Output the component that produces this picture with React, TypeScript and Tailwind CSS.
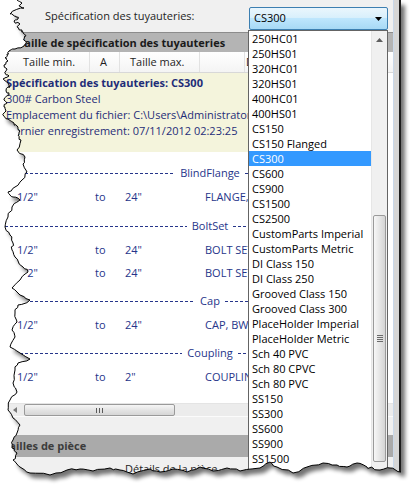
import React from "react";

const items = [
  "250HC01","250HS01","320HC01","320HS01","400HC01","400HS01","CS150","CS150 Flanged","CS300","CS600","CS900","CS1500","CS2500",
  "CustomParts Imperial","CustomParts Metric","DI Class 150","DI Class 250","Grooved Class 150","Grooved Class 300",
  "PlaceHolder Imperial","PlaceHolder Metric","Sch 40 PVC","Sch 80 CPVC","Sch 80 PVC","SS150","SS300","SS600","SS900","SS1500","SS2500",
];

const leftEdge: [number, number][] = [
  [17,0],[22,3],[19,6],[24,8],[13,11],[10,14],[16,16],[18,19],[14,21],[20,24],[17,27],[22,30],[23,33],[26,36],[24,39],[26,42],[24,46],[15,49],[9,51],[7,54],[5,58],[8,61],[4,65],[7,69],[5,73],[9,76],[3,79],[8,83],[10,87],[6,91],[9,95],[4,99],[7,103],[4,107],[6,111],[3,115],[8,119],[14,123],[18,127],[20,131],[18,135],[21,140],[17,150],[25,157],[23,164],[27,172],[22,180],[15,187],[8,192],[13,197],[20,200],[12,207],[8,217],[5,227],[10,235],[13,243],[12,250],[15,257],[23,267],[28,272],[20,280],[12,288],[20,295],[30,300],[18,305],[15,313],[17,322],[12,330],[15,337],[10,347],[20,353],[30,359],[18,363],[15,370],[13,383],[17,392],[10,400],[8,410],[13,418],[20,425],[17,433],[13,440],[12,448],[17,453],[13,460],[20,467],
];
const bottomEdge: [number, number][] = [
  [30,473],[50,475],[67,470],[80,469],[93,471],[110,468],[120,470],[133,474],[150,469],[160,472],[173,469],[187,472],[200,467],[213,471],[227,468],[240,471],[260,468],[270,462],[277,467],[293,473],[307,467],[323,463],[337,465],[347,467],[357,463],[367,467],[373,468],[380,470],[390,468],[401,472],
];

function jag(pts: [number, number][]): [number, number][] {
  const out: [number, number][] = [];
  let seed = 7;
  const rnd = () => {
    seed = (seed * 9301 + 49297) % 233280;
    return seed / 233280 - 0.5;
  };
  for (let i = 0; i < pts.length - 1; i++) {
    const [x1, y1] = pts[i];
    const [x2, y2] = pts[i + 1];
    out.push([x1, y1]);
    for (let k = 1; k < 3; k++) {
      const t = k / 3;
      out.push([x1 + (x2 - x1) * t + rnd() * 2.4, y1 + (y2 - y1) * t + rnd() * 2.4]);
    }
  }
  out.push(pts[pts.length - 1]);
  return out;
}

const edge = jag([...leftEdge, ...bottomEdge]);
const edgeD = edge.map((p, i) => `${i === 0 ? "M" : "L"}${p[0].toFixed(1)} ${p[1].toFixed(1)}`).join(" ");
const paperD = `${edgeD} L401 0 Z`;
const outsideD = `M-20 -20 H440 V520 H-20 Z ${paperD}`;

function Dashes() {
  return <div className="h-px flex-1 bg-[repeating-linear-gradient(90deg,#26358a_0px,#26358a_3px,transparent_3px,transparent_5px)]" />;
}

function GroupHeader({ label, className = "" }: { label: string; className?: string }) {
  return (
    <div className={`flex h-[24px] w-[420px] items-center ${className}`}>
      <Dashes />
      <span className="px-[5px] leading-[24px]">{label}</span>
      <Dashes />
    </div>
  );
}

function Row({ a, b, desc }: { a: string; b: string; desc: string }) {
  return (
    <div className="flex h-[23px] items-center whitespace-nowrap leading-[23px]">
      <span className="w-[38px] shrink-0 text-right">{a}</span>
      <span className="ml-[57px] w-[30px] shrink-0">to</span>
      <span className="w-[80px] shrink-0">{b}</span>
      <span className="w-[43px] shrink-0 overflow-hidden">{desc}</span>
    </div>
  );
}

export default function App() {
  return (
    <div className="relative h-[493px] w-[417px] overflow-hidden bg-white font-['Open_Sans',sans-serif] text-[11px]">
      <div className="flex h-full w-[401px]">
        <div className="flex w-[393px] flex-col bg-[#f0f0f0]">
          {/* top bar */}
          <div className="flex h-[32px] shrink-0 items-start pt-[7px]">
            <span className="ml-[45px] w-[204px] whitespace-nowrap leading-[18px] text-[#1e1e1e]">Spécification des tuyauteries:</span>
            <div className="relative flex h-[23px] w-[139px] items-center rounded-[2px] border border-[#3c7fb1] bg-[linear-gradient(#eaf6fd,#d9f0fc_45%,#bee6fd_50%,#a7d9f5)] pl-[4px] text-black">
              CS300
              <svg className="absolute right-[4px] top-[9px]" width="8" height="5" viewBox="0 0 8 5">
                <path d="M0 0 H7 L3.5 4 Z" fill="#000" />
              </svg>
            </div>
          </div>
          {/* section header */}
          <div className="h-[20px] shrink-0 border-t border-[#8c8c8c] bg-[#b4b4b4]">
            <div className="w-[248px] overflow-hidden whitespace-nowrap pl-[18px] font-bold leading-[19px] text-[#1a1a1a]">
              Taille de spécification des tuyauteries
            </div>
          </div>
          {/* column header */}
          <div className="h-[21px] shrink-0 border-b border-[#d8d8d8] bg-[linear-gradient(#ffffff,#f4f4f4)]">
            <div className="flex w-[248px] overflow-hidden whitespace-nowrap leading-[20px] text-[#1e1e1e]">
              <span className="w-[90px] shrink-0 border-r border-[#e2e2e2] pl-[23px]">Taille min.</span>
              <span className="w-[30px] shrink-0 border-r border-[#e2e2e2] pl-[10px]">A</span>
              <span className="w-[80px] shrink-0 border-r border-[#e2e2e2] pl-[10px]">Taille max.</span>
              <span className="w-[45px] shrink-0 border-r border-[#e2e2e2]"></span>
              <span className="w-[3px] shrink-0 overflow-hidden pl-[1px]">Description</span>
            </div>
          </div>
          {/* body */}
          <div className="h-[330px] shrink-0 bg-white text-[#26358a]">
            <div className="h-full w-[248px] overflow-hidden">
              <div className="h-[79px] whitespace-nowrap bg-[#f4f4dc] pl-[6px] pt-[2px] leading-[16px] text-[#1f2d78]">
                <div className="font-bold">Spécification des tuyauteries: CS300</div>
                <div>300# Carbon Steel</div>
                <div className="overflow-hidden">Emplacement du fichier: C:\Users\Administrator</div>
                <div>Dernier enregistrement: 07/11/2012 02:23:25</div>
              </div>
              <GroupHeader label="BlindFlange" className="mt-[9px]" />
              <Row a={'1/2"'} b={'24"'} desc="FLANGE, BLIND" />
              <GroupHeader label="BoltSet" className="mt-[6px]" />
              <Row a={'1/2"'} b={'24"'} desc="BOLT SET" />
              <Row a={'2"'} b={'24"'} desc="BOLT SET" />
              <GroupHeader label="Cap" className="mt-[5px]" />
              <Row a={'1/2"'} b={'24"'} desc="CAP, BW" />
              <GroupHeader label="Coupling" className="mt-[5px]" />
              <Row a={'1/2"'} b={'2"'} desc="COUPLING" />
            </div>
          </div>
          {/* horizontal scrollbar */}
          <div className="flex h-[13px] shrink-0 items-center border-t border-[#e4e4e4] bg-[#ececec]">
            <svg className="ml-[13px]" width="4" height="6" viewBox="0 0 4 6">
              <path d="M4 0 V6 L0 3 Z" fill="#7a7a7a" />
            </svg>
            <div className="ml-[7px] flex h-[12px] w-[151px] items-center justify-center gap-[2px] rounded-[2px] border border-[#9a9a9a] bg-[linear-gradient(#f6f6f6,#e4e4e4_50%,#d6d6d6)]">
              <span className="h-[5px] w-px bg-[#5a5a5a]" />
              <span className="h-[5px] w-px bg-[#5a5a5a]" />
              <span className="h-[5px] w-px bg-[#5a5a5a]" />
            </div>
          </div>
          <div className="h-[19px] shrink-0 border-t border-[#fbfbfb] bg-[#f0f0f0]" />
          {/* second band */}
          <div className="h-[22px] shrink-0 whitespace-nowrap bg-[#aaaaaa] pl-[3px] font-bold leading-[22px] text-[#3c3c3c]">
            Tailles de pièce
          </div>
          <div className="flex flex-1 items-start pt-[4px]">
            <div className="ml-[100px] mt-[10px] h-px w-[22px] bg-[#bdbdbd]" />
            <span className="ml-[3px] whitespace-nowrap leading-[16px] text-[#1e1e1e]">Détails de la pièce</span>
          </div>
        </div>
        <div className="w-px bg-[#c9d8ea]" />
        <div className="w-[5px] bg-[#d6d6d6]" />
        <div className="w-[2px] bg-[#1e1e1e]" />
      </div>

      {/* dropdown list */}
      <div className="absolute left-[248px] top-[30px] flex h-[463px] w-[140px] border border-[#646464] bg-white">
        <div className="flex-1 overflow-hidden">
          {items.map((it) => (
            <div
              key={it}
              className={`h-[15px] whitespace-nowrap pl-[3px] leading-[15px] ${it === "CS300" ? "bg-[#3399ff] text-white" : "text-black"}`}
            >
              {it}
            </div>
          ))}
        </div>
        <div className="flex w-[16px] flex-col border-l border-[#e6e6e6] bg-[#f0f0f0]">
          <div className="flex h-[17px] items-center justify-center">
            <svg width="7" height="4" viewBox="0 0 7 4">
              <path d="M0 4 H7 L3.5 0 Z" fill="#5e5e5e" />
            </svg>
          </div>
          <div className="h-[167px]" />
          <div className="mx-[1px] flex h-[247px] flex-col items-center justify-center gap-[1px] rounded-[2px] border border-[#9a9a9a] bg-[linear-gradient(90deg,#f7f7f7,#e6e6e6_50%,#d4d4d4)]">
            <span className="h-px w-[6px] bg-[#6a6a6a]" />
            <span className="h-px w-[6px] bg-[#6a6a6a]" />
            <span className="h-px w-[6px] bg-[#6a6a6a]" />
            <span className="h-px w-[6px] bg-[#6a6a6a]" />
          </div>
        </div>
      </div>

      {/* torn paper edge */}
      <svg className="pointer-events-none absolute left-0 top-0" width="417" height="493" viewBox="0 0 417 493">
        <defs>
          <clipPath id="outside">
            <path d={outsideD} clipRule="evenodd" />
          </clipPath>
          <filter id="blur" x="-10%" y="-10%" width="130%" height="130%">
            <feGaussianBlur stdDeviation="2.2" />
          </filter>
        </defs>
        <path d={outsideD} fill="#ffffff" fillRule="evenodd" />
        <g clipPath="url(#outside)">
          <path d={paperD} transform="translate(4 5)" fill="#000" opacity="0.55" filter="url(#blur)" />
        </g>
        <path d={edgeD} fill="none" stroke="#000" strokeWidth="1" />
      </svg>
    </div>
  );
}
